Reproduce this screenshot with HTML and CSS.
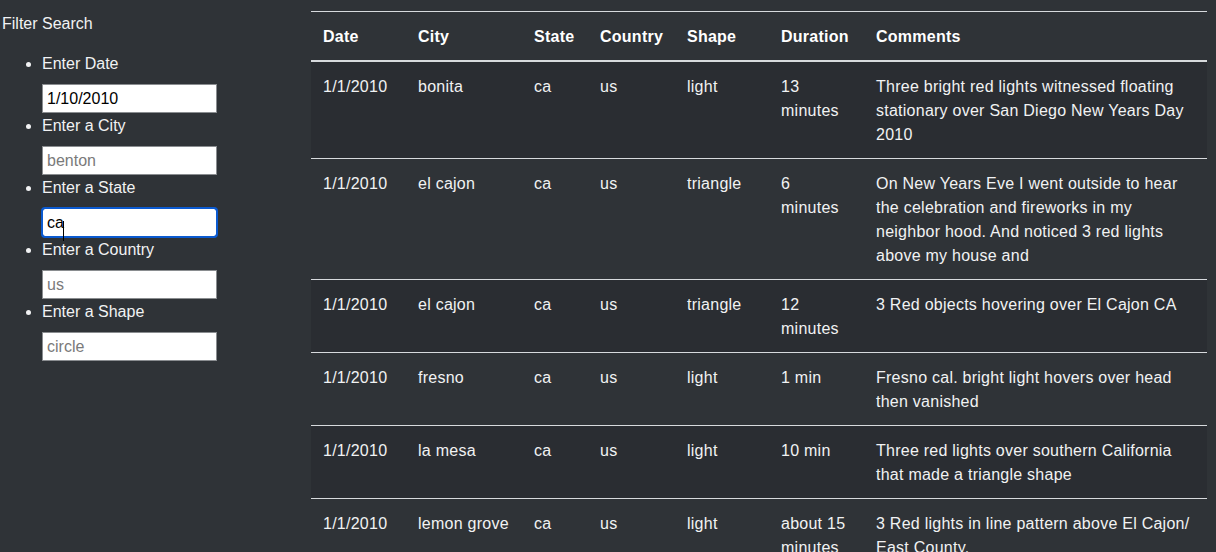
FILE: index.html
```html
<!DOCTYPE html>
<html lang="en">
<head>
<meta charset="utf-8">
<title>UFO Sightings</title>
<link rel="stylesheet" href="styles.css">
</head>
<body>
<div class="page">
  <aside class="sidebar">
    <div class="title">Filter Search</div>
    <ul class="filters">
      <li><label>Enter Date</label><input class="field" type="text" value="1/10/2010"></li>
      <li><label>Enter a City</label><input class="field" type="text" placeholder="benton"></li>
      <li><label>Enter a State</label><span class="field-wrap"><input class="field focused" type="text" value="ca"><span class="caret"></span></span></li>
      <li><label>Enter a Country</label><input class="field" type="text" placeholder="us"></li>
      <li><label>Enter a Shape</label><input class="field" type="text" placeholder="circle"></li>
    </ul>
  </aside>
  <main class="content">
    <table class="ufo">
      <colgroup>
        <col class="c-date"><col class="c-city"><col class="c-state"><col class="c-country"><col class="c-shape"><col class="c-dur"><col class="c-comm">
      </colgroup>
      <thead>
        <tr><th>Date</th><th>City</th><th>State</th><th>Country</th><th>Shape</th><th>Duration</th><th>Comments</th></tr>
      </thead>
      <tbody>
        <tr><td>1/1/2010</td><td>bonita</td><td>ca</td><td>us</td><td>light</td><td>13 minutes</td><td>Three bright red lights witnessed floating stationary over San Diego New Years Day 2010</td></tr>
        <tr><td>1/1/2010</td><td>el cajon</td><td>ca</td><td>us</td><td>triangle</td><td>6 minutes</td><td>On New Years Eve I went outside to hear the celebration and fireworks in my neighbor hood. And noticed 3 red lights above my house and</td></tr>
        <tr><td>1/1/2010</td><td>el cajon</td><td>ca</td><td>us</td><td>triangle</td><td>12 minutes</td><td>3 Red objects hovering over El Cajon CA</td></tr>
        <tr><td>1/1/2010</td><td>fresno</td><td>ca</td><td>us</td><td>light</td><td>1 min</td><td>Fresno cal. bright light hovers over head then vanished</td></tr>
        <tr><td>1/1/2010</td><td>la mesa</td><td>ca</td><td>us</td><td>light</td><td>10 min</td><td>Three red lights over southern California that made a triangle shape</td></tr>
        <tr><td>1/1/2010</td><td>lemon grove</td><td>ca</td><td>us</td><td>light</td><td>about 15 minutes</td><td>3 Red lights in line pattern above El Cajon/ East County.</td></tr>
      </tbody>
    </table>
  </main>
</div>
</body>
</html>
```

FILE: styles.css
```css
html, body {
  margin: 0;
  padding: 0;
  background: #2f3337;
  color: #f1f2f3;
  font-family: "Liberation Sans", Arial, sans-serif;
  font-size: 16px;
  line-height: 24px;
  overflow: hidden;
}

.page {
  display: flex;
  align-items: flex-start;
  height: 552px;
}

.sidebar {
  width: 309px;
  flex: none;
  padding: 12px 0 0 2px;
}

.title {
  line-height: 24px;
}

.filters {
  margin: 15px 0 0 0;
  padding-left: 40px;
}

.filters li {
  line-height: 24px;
}

.filters label {
  display: block;
  padding-top: 1px;
}

.field {
  display: block;
  box-sizing: border-box;
  width: 175px;
  height: 29px;
  margin: 8px 0 0 0;
  padding: 0 4px;
  border: 1px solid #8a8d90;
  border-radius: 0;
  background: #ffffff;
  color: #000000;
  font-family: "Liberation Sans", Arial, sans-serif;
  font-size: 16px;
}

.field::placeholder {
  color: #7a7a7a;
}

.field-wrap {
  display: block;
  position: relative;
}

.field.focused {
  outline: 2px solid #0b5ad0;
  outline-offset: -1px;
  border-radius: 3px;
  border-color: #0b5ad0;
}

.caret {
  position: absolute;
  left: 21px;
  top: 13px;
  width: 1px;
  height: 20px;
  background: #000;
}

.content {
  flex: none;
  width: 896px;
  padding-top: 11px;
}

.ufo {
  width: 896px;
  table-layout: fixed;
  border-collapse: collapse;
  letter-spacing: 0.25px;
}

.c-date { width: 95px; }
.c-city { width: 116px; }
.c-state { width: 66px; }
.c-country { width: 87px; }
.c-shape { width: 94px; }
.c-dur { width: 95px; }
.c-comm { width: 343px; }

.ufo th,
.ufo td {
  padding: 13px 12px 11px 12px;
  text-align: left;
  vertical-align: top;
  line-height: 24px;
  border-top: 1px solid #d7dadd;
}

.ufo th {
  font-weight: bold;
  color: #ffffff;
  border-bottom: 2px solid #d7dadd;
}

.ufo tbody tr:first-child td {
  border-top: none;
}

.ufo tbody tr:nth-child(odd) {
  background: #2a2d32;
}
```
